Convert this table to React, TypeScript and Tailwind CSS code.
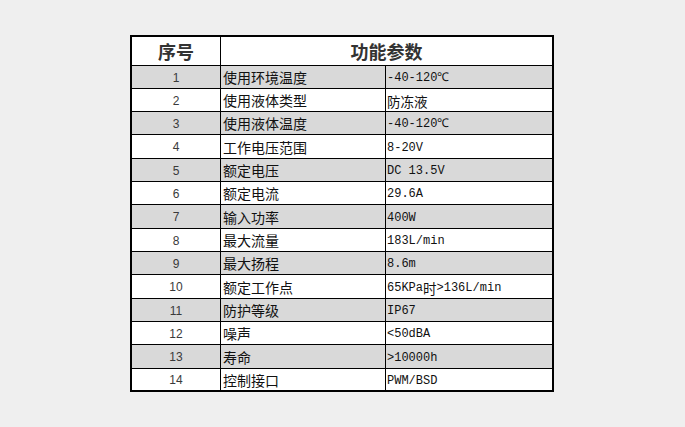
import React from "react";

const rows: { n: string; name: string; val: string; h: string }[] = [
  { n: "1", name: "使用环境温度", val: "-40-120℃", h: "h-[22px]" },
  { n: "2", name: "使用液体类型", val: "防冻液", h: "h-[22px]" },
  { n: "3", name: "使用液体温度", val: "-40-120℃", h: "h-[22px]" },
  { n: "4", name: "工作电压范围", val: "8-20V", h: "h-[23px]" },
  { n: "5", name: "额定电压", val: "DC 13.5V", h: "h-[22px]" },
  { n: "6", name: "额定电流", val: "29.6A", h: "h-[22px]" },
  { n: "7", name: "输入功率", val: "400W", h: "h-[23px]" },
  { n: "8", name: "最大流量", val: "183L/min", h: "h-[22px]" },
  { n: "9", name: "最大扬程", val: "8.6m", h: "h-[22px]" },
  { n: "10", name: "额定工作点", val: "65KPa时>136L/min", h: "h-[23px]" },
  { n: "11", name: "防护等级", val: "IP67", h: "h-[22px]" },
  { n: "12", name: "噪声", val: "<50dBA", h: "h-[22px]" },
  { n: "13", name: "寿命", val: ">10000h", h: "h-[23px]" },
  { n: "14", name: "控制接口", val: "PWM/BSD", h: "h-[21px]" },
];

const cjk = "font-['Noto_Sans_CJK_SC',sans-serif]";

function Value({ text }: { text: string }) {
  const parts = text.split(/([\u4e00-\u9fff]+)/).filter((p) => p.length > 0);
  return (
    <>
      {parts.map((p, i) =>
        /[\u4e00-\u9fff]/.test(p) ? (
          <span key={i} className={`text-[13.5px] ${cjk}`}>
            {p}
          </span>
        ) : (
          <span key={i}>{p}</span>
        )
      )}
    </>
  );
}

export default function App() {
  return (
    <div className="w-[685px] h-[427px] bg-[#efefef] pt-[35px] pl-[130px]">
      <div className="w-[424px] border-2 border-black bg-white flex flex-col">
        <div className="flex h-[29px] border-b border-black">
          <div
            className={`w-[89px] border-r border-black flex items-center justify-center text-[18px] leading-[29px] font-bold text-[#333] ${cjk}`}
          >
            序号
          </div>
          <div
            className={`flex-1 flex items-center justify-center text-[18px] leading-[29px] font-bold text-[#333] ${cjk}`}
          >
            功能参数
          </div>
        </div>
        {rows.map((r, i) => (
          <div
            key={r.n}
            className={`flex box-content ${r.h} ${i < rows.length - 1 ? "border-b border-black" : ""} ${i % 2 === 0 ? "bg-[#d9d9d9]" : "bg-white"}`}
          >
            <div className="w-[89px] border-r border-black flex items-center justify-center pt-[1px] text-[12px] leading-[20px] text-[#3a3a3a] font-['Liberation_Sans',sans-serif]">
              {r.n}
            </div>
            <div
              className={`w-[165px] border-r border-black flex items-center pl-[2px] text-[14px] leading-[20px] text-[#111] ${cjk}`}
            >
              {r.name}
            </div>
            <div className="flex-1 flex items-center pl-[1px] pt-[2px] text-[12px] leading-[20px] text-[#111] font-['Liberation_Mono',monospace] whitespace-pre">
              <Value text={r.val} />
            </div>
          </div>
        ))}
      </div>
    </div>
  );
}
